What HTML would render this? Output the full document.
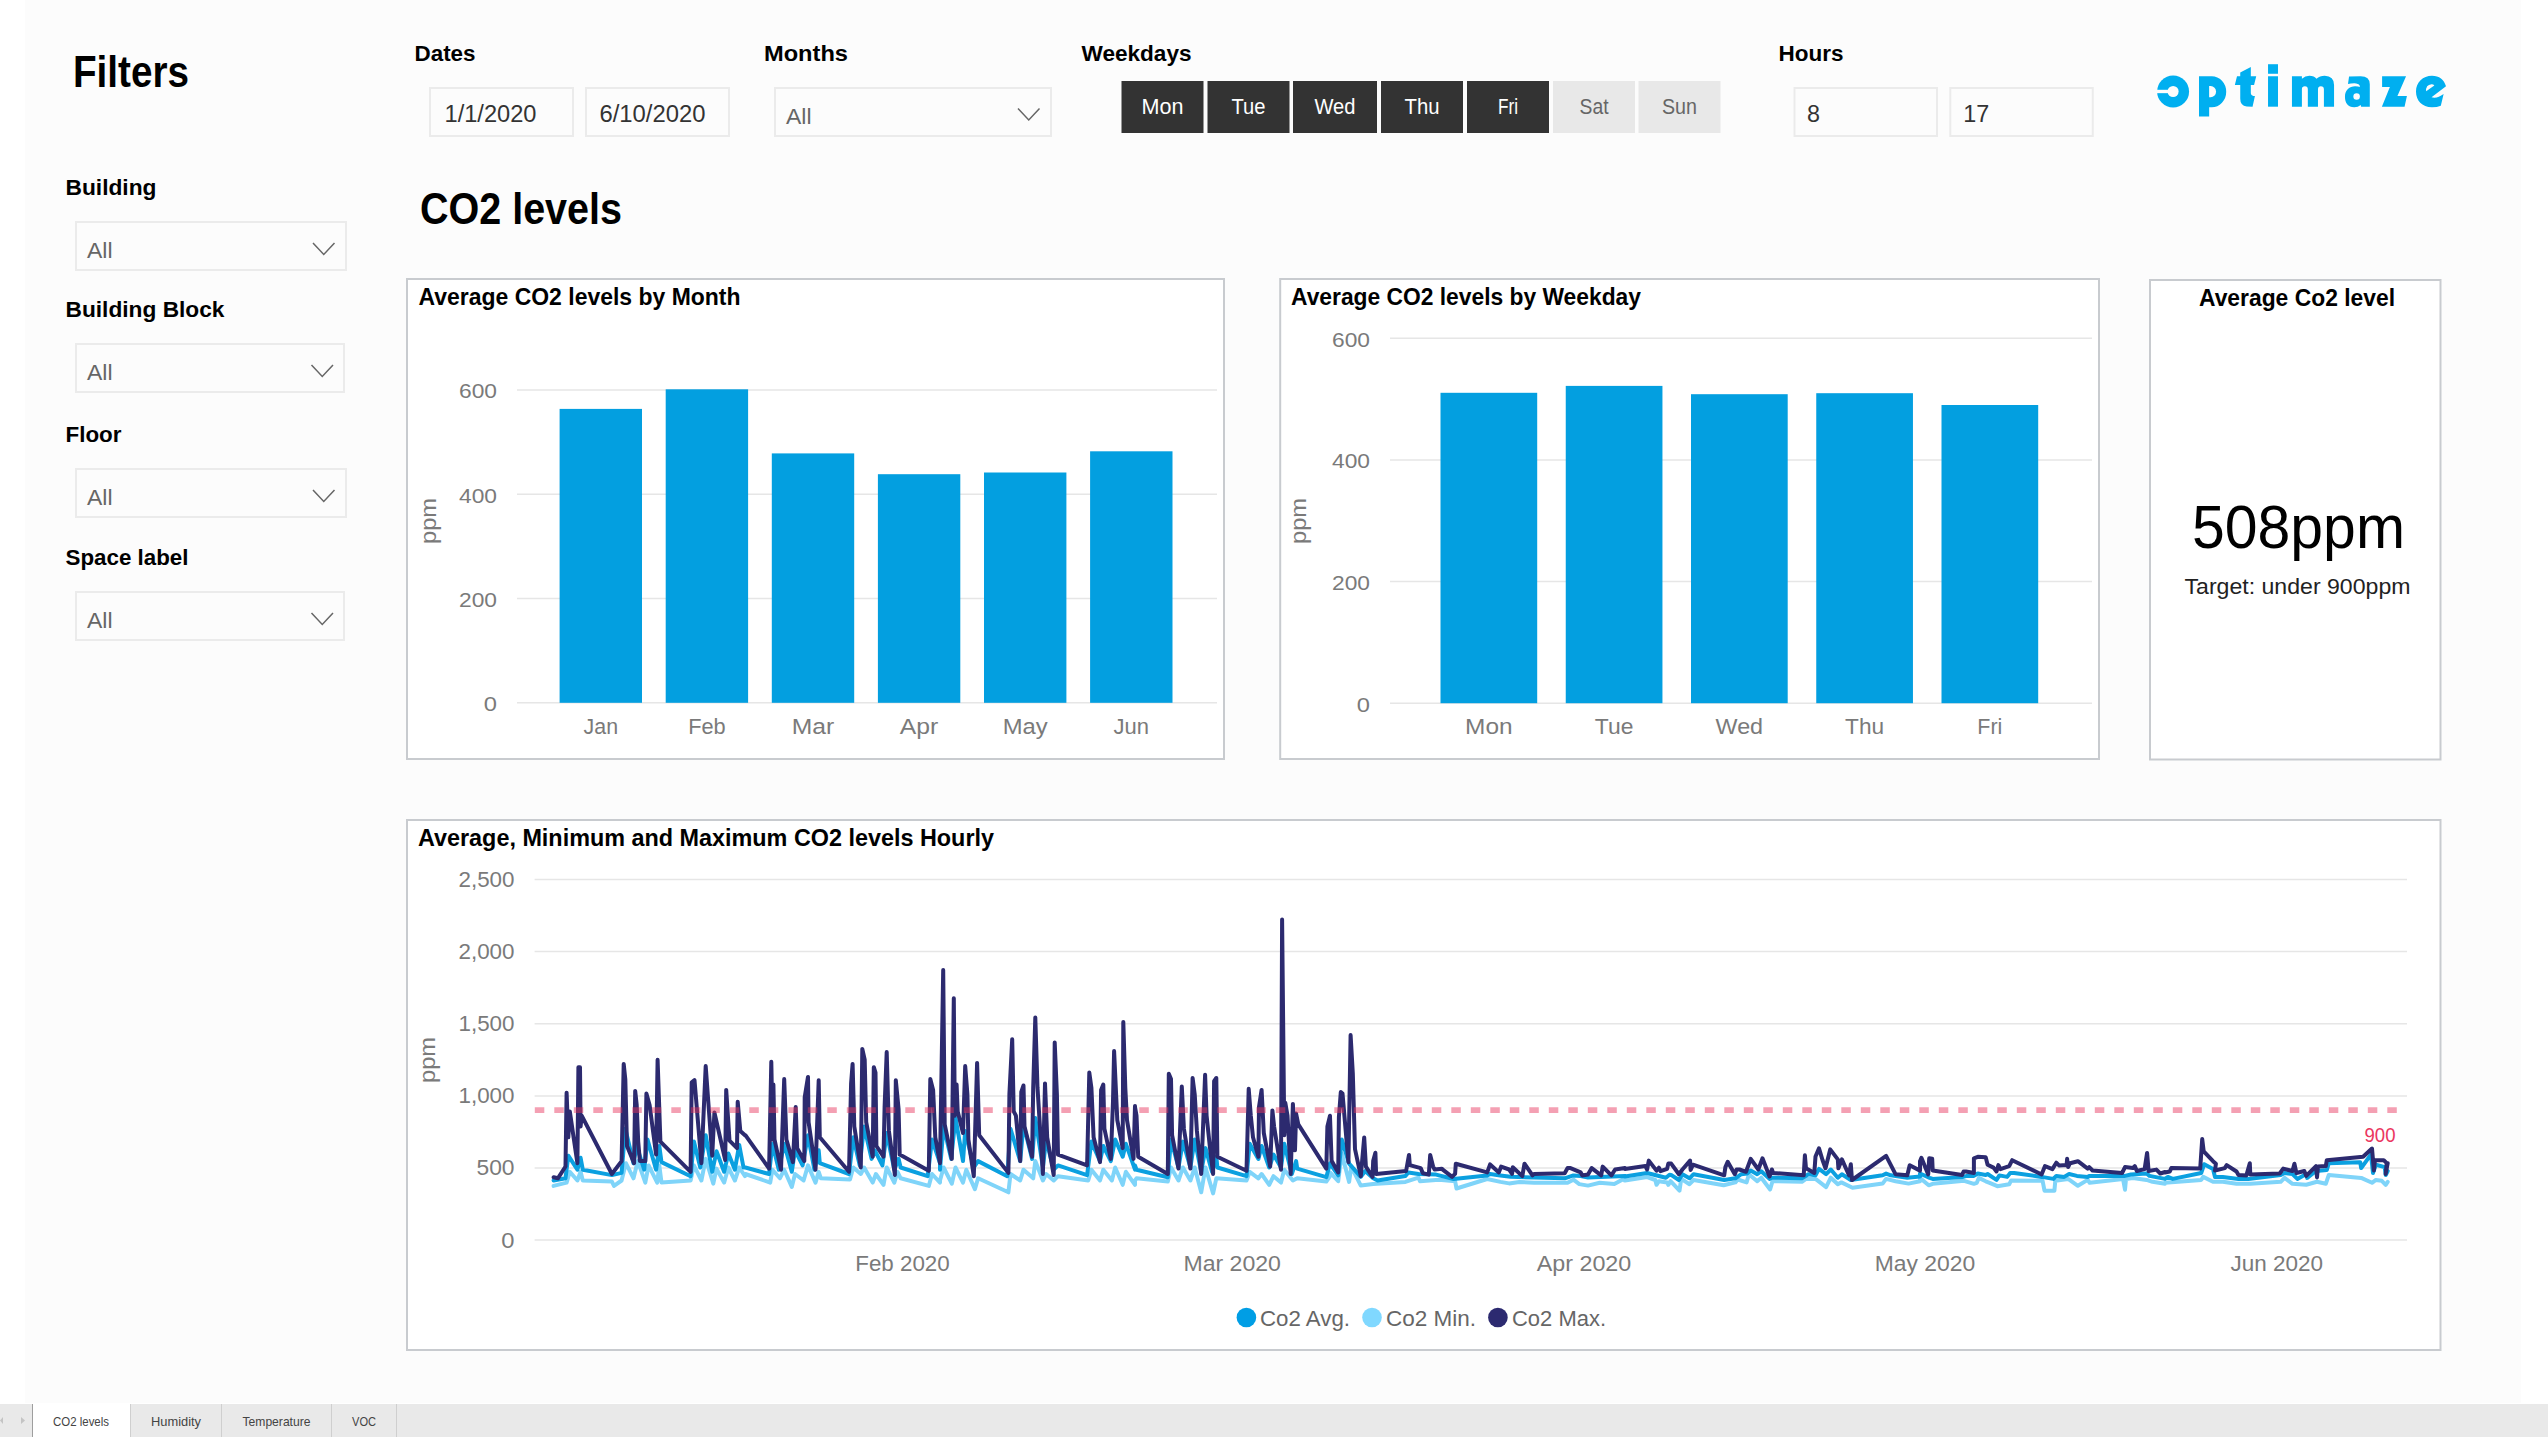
<!DOCTYPE html>
<html><head><meta charset="utf-8"><title>CO2 levels</title>
<style>
html,body{margin:0;padding:0;background:#fff;overflow:hidden;}
svg{display:block;font-family:"Liberation Sans", sans-serif;}
</style></head><body>
<svg width="2548" height="1437" viewBox="0 0 2548 1437">
<rect x="0" y="0" width="2548" height="1437" fill="#ffffff"/>
<rect x="25" y="0" width="2496" height="1403" fill="#fcfcfc"/>
<rect x="0" y="1404" width="2548" height="33" fill="#e9e9e9"/>
<rect x="33" y="1404" width="97" height="33" fill="#ffffff"/>
<line x1="32.5" y1="1404" x2="32.5" y2="1437" stroke="#9e9e9e" stroke-width="1"/>
<line x1="130.5" y1="1404" x2="130.5" y2="1437" stroke="#cfcfcf" stroke-width="1"/>
<line x1="221.5" y1="1404" x2="221.5" y2="1437" stroke="#cfcfcf" stroke-width="1"/>
<line x1="331.5" y1="1404" x2="331.5" y2="1437" stroke="#cfcfcf" stroke-width="1"/>
<line x1="396.5" y1="1404" x2="396.5" y2="1437" stroke="#cfcfcf" stroke-width="1"/>
<path d="M0 1420.5 L3 1417 L3 1424 Z" fill="#c4c4c4"/>
<path d="M21 1417 L25 1420.5 L21 1424 Z" fill="#c4c4c4"/>
<text x="53" y="1426" font-size="13.5" fill="#444" text-anchor="start" textLength="56" lengthAdjust="spacingAndGlyphs">CO2 levels</text>
<text x="151" y="1426" font-size="13.5" fill="#444" text-anchor="start" textLength="50" lengthAdjust="spacingAndGlyphs">Humidity</text>
<text x="242.5" y="1426" font-size="13.5" fill="#444" text-anchor="start" textLength="68" lengthAdjust="spacingAndGlyphs">Temperature</text>
<text x="352" y="1426" font-size="13.5" fill="#444" text-anchor="start" textLength="24" lengthAdjust="spacingAndGlyphs">VOC</text>
<text x="73" y="87" font-size="43.6" fill="#000" font-weight="bold" text-anchor="start" textLength="116" lengthAdjust="spacingAndGlyphs">Filters</text>
<text x="65.5" y="195" font-size="22" fill="#000" font-weight="bold" text-anchor="start" textLength="91" lengthAdjust="spacingAndGlyphs">Building</text>
<text x="65.5" y="317.3" font-size="22" fill="#000" font-weight="bold" text-anchor="start" textLength="159" lengthAdjust="spacingAndGlyphs">Building Block</text>
<text x="65.5" y="442.4" font-size="22" fill="#000" font-weight="bold" text-anchor="start" textLength="56" lengthAdjust="spacingAndGlyphs">Floor</text>
<text x="65.5" y="565.3" font-size="22" fill="#000" font-weight="bold" text-anchor="start" textLength="123" lengthAdjust="spacingAndGlyphs">Space label</text>
<rect x="76" y="222" width="270" height="48" fill="#fcfcfc" stroke="#ebebeb" stroke-width="2"/>
<text x="87" y="258" font-size="22" fill="#666" text-anchor="start" textLength="25.5" lengthAdjust="spacingAndGlyphs">All</text>
<path d="M313 243 L323.75 254.5 L334.5 243" fill="none" stroke="#666" stroke-width="1.5"/>
<rect x="76" y="344" width="268" height="48" fill="#fcfcfc" stroke="#ebebeb" stroke-width="2"/>
<text x="87" y="380" font-size="22" fill="#666" text-anchor="start" textLength="25.5" lengthAdjust="spacingAndGlyphs">All</text>
<path d="M311.5 365 L322.25 376.5 L333.0 365" fill="none" stroke="#666" stroke-width="1.5"/>
<rect x="76" y="469" width="270" height="48" fill="#fcfcfc" stroke="#ebebeb" stroke-width="2"/>
<text x="87" y="505" font-size="22" fill="#666" text-anchor="start" textLength="25.5" lengthAdjust="spacingAndGlyphs">All</text>
<path d="M313 490 L323.75 501.5 L334.5 490" fill="none" stroke="#666" stroke-width="1.5"/>
<rect x="76" y="592" width="268" height="48" fill="#fcfcfc" stroke="#ebebeb" stroke-width="2"/>
<text x="87" y="628" font-size="22" fill="#666" text-anchor="start" textLength="25.5" lengthAdjust="spacingAndGlyphs">All</text>
<path d="M311.5 613 L322.25 624.5 L333.0 613" fill="none" stroke="#666" stroke-width="1.5"/>
<text x="414.5" y="61" font-size="22" fill="#000" font-weight="bold" text-anchor="start" textLength="61" lengthAdjust="spacingAndGlyphs">Dates</text>
<text x="764" y="61" font-size="22" fill="#000" font-weight="bold" text-anchor="start" textLength="84" lengthAdjust="spacingAndGlyphs">Months</text>
<text x="1081.5" y="61" font-size="22" fill="#000" font-weight="bold" text-anchor="start" textLength="110" lengthAdjust="spacingAndGlyphs">Weekdays</text>
<text x="1778.5" y="61" font-size="22" fill="#000" font-weight="bold" text-anchor="start" textLength="65" lengthAdjust="spacingAndGlyphs">Hours</text>
<rect x="430" y="88" width="143" height="48" fill="#fcfcfc" stroke="#ebebeb" stroke-width="2"/>
<text x="444.5" y="122" font-size="23.5" fill="#333333" text-anchor="start" textLength="92" lengthAdjust="spacingAndGlyphs">1/1/2020</text>
<rect x="586" y="88" width="143" height="48" fill="#fcfcfc" stroke="#ebebeb" stroke-width="2"/>
<text x="599.5" y="122" font-size="23.5" fill="#333333" text-anchor="start" textLength="106" lengthAdjust="spacingAndGlyphs">6/10/2020</text>
<rect x="1794.5" y="88" width="142.5" height="48" fill="#fcfcfc" stroke="#ebebeb" stroke-width="2"/>
<text x="1807.0" y="122" font-size="23.5" fill="#333333" text-anchor="start" textLength="13" lengthAdjust="spacingAndGlyphs">8</text>
<rect x="1950.3" y="88" width="142.5" height="48" fill="#fcfcfc" stroke="#ebebeb" stroke-width="2"/>
<text x="1963.3" y="122" font-size="23.5" fill="#333333" text-anchor="start" textLength="26" lengthAdjust="spacingAndGlyphs">17</text>
<rect x="775" y="88" width="276" height="48" fill="#fcfcfc" stroke="#ebebeb" stroke-width="2"/>
<text x="786" y="124" font-size="22" fill="#666" text-anchor="start" textLength="25.5" lengthAdjust="spacingAndGlyphs">All</text>
<path d="M1018 108.5 L1028.75 120 L1039.5 108.5" fill="none" stroke="#666" stroke-width="1.5"/>
<rect x="1121.5" y="81" width="82" height="52" fill="#333333"/>
<text x="1162.5" y="114" font-size="21.8" fill="#ffffff" text-anchor="middle" textLength="42" lengthAdjust="spacingAndGlyphs">Mon</text>
<rect x="1207.5" y="81" width="82" height="52" fill="#333333"/>
<text x="1248.5" y="114" font-size="21.8" fill="#ffffff" text-anchor="middle" textLength="34" lengthAdjust="spacingAndGlyphs">Tue</text>
<rect x="1293" y="81" width="84" height="52" fill="#333333"/>
<text x="1335.0" y="114" font-size="21.8" fill="#ffffff" text-anchor="middle" textLength="41" lengthAdjust="spacingAndGlyphs">Wed</text>
<rect x="1381" y="81" width="82" height="52" fill="#333333"/>
<text x="1422.0" y="114" font-size="21.8" fill="#ffffff" text-anchor="middle" textLength="35" lengthAdjust="spacingAndGlyphs">Thu</text>
<rect x="1467" y="81" width="82" height="52" fill="#333333"/>
<text x="1508.0" y="114" font-size="21.8" fill="#ffffff" text-anchor="middle" textLength="20" lengthAdjust="spacingAndGlyphs">Fri</text>
<rect x="1553" y="81" width="82" height="52" fill="#e8e8e8"/>
<text x="1594.0" y="114" font-size="21.8" fill="#666666" text-anchor="middle" textLength="29" lengthAdjust="spacingAndGlyphs">Sat</text>
<rect x="1638.5" y="81" width="82" height="52" fill="#e8e8e8"/>
<text x="1679.5" y="114" font-size="21.8" fill="#666666" text-anchor="middle" textLength="35" lengthAdjust="spacingAndGlyphs">Sun</text>
<text x="420" y="224" font-size="43.5" fill="#000" font-weight="bold" text-anchor="start" textLength="202" lengthAdjust="spacingAndGlyphs">CO2 levels</text>
<rect x="407" y="279" width="817" height="480" fill="#ffffff" stroke="#c8cbcf" stroke-width="2"/>
<rect x="1280.2" y="279" width="818.8" height="480" fill="#ffffff" stroke="#c8cbcf" stroke-width="2"/>
<rect x="2150" y="280" width="290.5" height="479.5" fill="#ffffff" stroke="#c8cbcf" stroke-width="2"/>
<rect x="407" y="820" width="2033.5" height="530" fill="#ffffff" stroke="#c8cbcf" stroke-width="2"/>
<text x="418.5" y="304.8" font-size="23" fill="#000" font-weight="bold" text-anchor="start" textLength="322" lengthAdjust="spacingAndGlyphs">Average CO2 levels by Month</text>
<line x1="517" y1="702.8" x2="1217" y2="702.8" stroke="#e6e6e6" stroke-width="1.5"/>
<text x="497" y="711.0999999999999" font-size="21" fill="#7a7a7a" text-anchor="end" textLength="13.2" lengthAdjust="spacingAndGlyphs">0</text>
<line x1="517" y1="598.6" x2="1217" y2="598.6" stroke="#e6e6e6" stroke-width="1.5"/>
<text x="497" y="606.8666666666666" font-size="21" fill="#7a7a7a" text-anchor="end" textLength="38" lengthAdjust="spacingAndGlyphs">200</text>
<line x1="517" y1="494.3" x2="1217" y2="494.3" stroke="#e6e6e6" stroke-width="1.5"/>
<text x="497" y="502.6333333333334" font-size="21" fill="#7a7a7a" text-anchor="end" textLength="38" lengthAdjust="spacingAndGlyphs">400</text>
<line x1="517" y1="390.1" x2="1217" y2="390.1" stroke="#e6e6e6" stroke-width="1.5"/>
<text x="497" y="398.40000000000003" font-size="21" fill="#7a7a7a" text-anchor="end" textLength="38" lengthAdjust="spacingAndGlyphs">600</text>
<rect x="559.6" y="408.9" width="82.4" height="293.9" fill="#039fe0"/>
<text x="600.8000000000001" y="733.7" font-size="21.5" fill="#7a7a7a" text-anchor="middle" textLength="34.5" lengthAdjust="spacingAndGlyphs">Jan</text>
<rect x="665.7" y="389.3" width="82.4" height="313.49999999999994" fill="#039fe0"/>
<text x="706.9000000000001" y="733.7" font-size="21.5" fill="#7a7a7a" text-anchor="middle" textLength="37.5" lengthAdjust="spacingAndGlyphs">Feb</text>
<rect x="771.8" y="453.4" width="82.4" height="249.39999999999998" fill="#039fe0"/>
<text x="813.0" y="733.7" font-size="21.5" fill="#7a7a7a" text-anchor="middle" textLength="42.5" lengthAdjust="spacingAndGlyphs">Mar</text>
<rect x="877.9" y="474.2" width="82.4" height="228.59999999999997" fill="#039fe0"/>
<text x="919.1" y="733.7" font-size="21.5" fill="#7a7a7a" text-anchor="middle" textLength="38.5" lengthAdjust="spacingAndGlyphs">Apr</text>
<rect x="984.0" y="472.5" width="82.4" height="230.29999999999995" fill="#039fe0"/>
<text x="1025.2" y="733.7" font-size="21.5" fill="#7a7a7a" text-anchor="middle" textLength="45" lengthAdjust="spacingAndGlyphs">May</text>
<rect x="1090.1" y="451.3" width="82.4" height="251.49999999999994" fill="#039fe0"/>
<text x="1131.3" y="733.7" font-size="21.5" fill="#7a7a7a" text-anchor="middle" textLength="35.5" lengthAdjust="spacingAndGlyphs">Jun</text>
<text transform="translate(436,521) rotate(-90)" font-size="22" fill="#7a7a7a" text-anchor="middle" textLength="46" lengthAdjust="spacingAndGlyphs">ppm</text>
<text x="1291" y="304.8" font-size="23" fill="#000" font-weight="bold" text-anchor="start" textLength="350" lengthAdjust="spacingAndGlyphs">Average CO2 levels by Weekday</text>
<line x1="1390" y1="703.2" x2="2092" y2="703.2" stroke="#e6e6e6" stroke-width="1.5"/>
<text x="1370" y="711.5" font-size="21" fill="#7a7a7a" text-anchor="end" textLength="13.2" lengthAdjust="spacingAndGlyphs">0</text>
<line x1="1390" y1="581.5" x2="2092" y2="581.5" stroke="#e6e6e6" stroke-width="1.5"/>
<text x="1370" y="589.8333333333333" font-size="21" fill="#7a7a7a" text-anchor="end" textLength="38" lengthAdjust="spacingAndGlyphs">200</text>
<line x1="1390" y1="459.9" x2="2092" y2="459.9" stroke="#e6e6e6" stroke-width="1.5"/>
<text x="1370" y="468.1666666666667" font-size="21" fill="#7a7a7a" text-anchor="end" textLength="38" lengthAdjust="spacingAndGlyphs">400</text>
<line x1="1390" y1="338.2" x2="2092" y2="338.2" stroke="#e6e6e6" stroke-width="1.5"/>
<text x="1370" y="346.5" font-size="21" fill="#7a7a7a" text-anchor="end" textLength="38" lengthAdjust="spacingAndGlyphs">600</text>
<rect x="1440.5" y="392.8" width="96.7" height="310.40000000000003" fill="#039fe0"/>
<text x="1488.85" y="733.7" font-size="21.5" fill="#7a7a7a" text-anchor="middle" textLength="47.5" lengthAdjust="spacingAndGlyphs">Mon</text>
<rect x="1565.75" y="385.9" width="96.7" height="317.30000000000007" fill="#039fe0"/>
<text x="1614.1" y="733.7" font-size="21.5" fill="#7a7a7a" text-anchor="middle" textLength="38.5" lengthAdjust="spacingAndGlyphs">Tue</text>
<rect x="1691.0" y="394.2" width="96.7" height="309.00000000000006" fill="#039fe0"/>
<text x="1739.35" y="733.7" font-size="21.5" fill="#7a7a7a" text-anchor="middle" textLength="47.5" lengthAdjust="spacingAndGlyphs">Wed</text>
<rect x="1816.25" y="393.2" width="96.7" height="310.00000000000006" fill="#039fe0"/>
<text x="1864.6" y="733.7" font-size="21.5" fill="#7a7a7a" text-anchor="middle" textLength="39" lengthAdjust="spacingAndGlyphs">Thu</text>
<rect x="1941.5" y="405.0" width="96.7" height="298.20000000000005" fill="#039fe0"/>
<text x="1989.85" y="733.7" font-size="21.5" fill="#7a7a7a" text-anchor="middle" textLength="25" lengthAdjust="spacingAndGlyphs">Fri</text>
<text transform="translate(1306,521) rotate(-90)" font-size="22" fill="#7a7a7a" text-anchor="middle" textLength="46" lengthAdjust="spacingAndGlyphs">ppm</text>
<text x="2297" y="305.8" font-size="23.3" fill="#000" font-weight="bold" text-anchor="middle" textLength="196" lengthAdjust="spacingAndGlyphs">Average Co2 level</text>
<text x="2298.5" y="548.4" font-size="61" fill="#000" text-anchor="middle" textLength="213" lengthAdjust="spacingAndGlyphs">508ppm</text>
<text x="2297.5" y="594.3" font-size="22.8" fill="#222" text-anchor="middle" textLength="226" lengthAdjust="spacingAndGlyphs">Target: under 900ppm</text>
<text x="418" y="845.8" font-size="23" fill="#000" font-weight="bold" text-anchor="start" textLength="576" lengthAdjust="spacingAndGlyphs">Average, Minimum and Maximum CO2 levels Hourly</text>
<line x1="534.6" y1="1240.1" x2="2407" y2="1240.1" stroke="#e6e6e6" stroke-width="1.5"/>
<text x="514.5" y="1247.6" font-size="21.5" fill="#7a7a7a" text-anchor="end" textLength="13.2" lengthAdjust="spacingAndGlyphs">0</text>
<line x1="534.6" y1="1168.0" x2="2407" y2="1168.0" stroke="#e6e6e6" stroke-width="1.5"/>
<text x="514.5" y="1175.48" font-size="21.5" fill="#7a7a7a" text-anchor="end" textLength="38" lengthAdjust="spacingAndGlyphs">500</text>
<line x1="534.6" y1="1095.9" x2="2407" y2="1095.9" stroke="#e6e6e6" stroke-width="1.5"/>
<text x="514.5" y="1103.36" font-size="21.5" fill="#7a7a7a" text-anchor="end" textLength="56" lengthAdjust="spacingAndGlyphs">1,000</text>
<line x1="534.6" y1="1023.7" x2="2407" y2="1023.7" stroke="#e6e6e6" stroke-width="1.5"/>
<text x="514.5" y="1031.24" font-size="21.5" fill="#7a7a7a" text-anchor="end" textLength="56" lengthAdjust="spacingAndGlyphs">1,500</text>
<line x1="534.6" y1="951.6" x2="2407" y2="951.6" stroke="#e6e6e6" stroke-width="1.5"/>
<text x="514.5" y="959.12" font-size="21.5" fill="#7a7a7a" text-anchor="end" textLength="56" lengthAdjust="spacingAndGlyphs">2,000</text>
<line x1="534.6" y1="879.5" x2="2407" y2="879.5" stroke="#e6e6e6" stroke-width="1.5"/>
<text x="514.5" y="887.0" font-size="21.5" fill="#7a7a7a" text-anchor="end" textLength="56" lengthAdjust="spacingAndGlyphs">2,500</text>
<text transform="translate(435,1060) rotate(-90)" font-size="22" fill="#7a7a7a" text-anchor="middle" textLength="46" lengthAdjust="spacingAndGlyphs">ppm</text>
<text x="902.5" y="1271" font-size="21.5" fill="#7a7a7a" text-anchor="middle" textLength="94.5" lengthAdjust="spacingAndGlyphs">Feb 2020</text>
<text x="1232.2" y="1271" font-size="21.5" fill="#7a7a7a" text-anchor="middle" textLength="97.5" lengthAdjust="spacingAndGlyphs">Mar 2020</text>
<text x="1584" y="1271" font-size="21.5" fill="#7a7a7a" text-anchor="middle" textLength="94.5" lengthAdjust="spacingAndGlyphs">Apr 2020</text>
<text x="1925" y="1271" font-size="21.5" fill="#7a7a7a" text-anchor="middle" textLength="100.5" lengthAdjust="spacingAndGlyphs">May 2020</text>
<text x="2276.8" y="1271" font-size="21.5" fill="#7a7a7a" text-anchor="middle" textLength="92.5" lengthAdjust="spacingAndGlyphs">Jun 2020</text>
<path d="M553.6 1185.9 L566.6 1182.6 L569.8 1171.8 L577.4 1180.5 L580.6 1171.8 L582.8 1180.5 L611.9 1181.6 L614.0 1185.9 L621.6 1180.5 L625.9 1163.2 L633.5 1178.3 L637.8 1161.1 L645.3 1182.6 L648.6 1165.4 L657.2 1182.6 L659.3 1165.4 L661.5 1182.6 L690.6 1180.5 L693.9 1165.4 L701.4 1180.5 L705.7 1158.9 L713.3 1183.7 L716.5 1168.6 L724.1 1182.6 L728.4 1167.5 L734.9 1180.5 L739.2 1167.5 L745.0 1176.2 L745.4 1174.0 L770.2 1182.6 L772.4 1169.7 L779.9 1178.3 L784.2 1169.7 L791.8 1186.9 L795.0 1174.0 L803.6 1180.5 L808.0 1165.4 L815.5 1182.6 L818.7 1171.8 L820.9 1178.3 L850.0 1179.4 L853.3 1167.5 L860.8 1174.0 L864.1 1167.5 L872.7 1182.6 L875.9 1174.0 L883.5 1184.8 L886.7 1167.5 L894.3 1182.6 L897.5 1171.8 L900.7 1178.3 L928.8 1185.9 L932.0 1174.0 L940.0 1182.6 L940.0 1180.5 L943.6 1167.5 L951.8 1183.7 L955.5 1167.5 L963.0 1182.6 L966.3 1169.7 L974.9 1189.1 L978.1 1178.3 L1008.4 1192.3 L1010.5 1174.0 L1020.2 1180.5 L1023.5 1169.7 L1033.2 1178.3 L1035.3 1161.1 L1042.9 1180.5 L1046.1 1174.0 L1053.7 1180.5 L1058.0 1176.2 L1088.2 1180.5 L1091.4 1169.7 L1100.0 1180.5 L1103.3 1169.7 L1111.9 1180.5 L1115.2 1167.5 L1122.7 1184.8 L1125.9 1171.8 L1135.0 1184.8 L1135.0 1180.5 L1136.5 1178.3 L1167.8 1181.6 L1171.0 1167.5 L1178.5 1180.5 L1182.9 1167.5 L1190.4 1180.5 L1194.7 1167.5 L1201.2 1192.3 L1205.5 1167.5 L1213.1 1193.4 L1216.3 1178.3 L1246.5 1180.5 L1249.7 1171.8 L1258.4 1178.3 L1261.6 1174.0 L1269.2 1184.8 L1273.5 1176.2 L1281.0 1182.6 L1284.3 1169.7 L1292.9 1180.5 L1297.2 1178.3 L1326.3 1181.6 L1330.0 1176.2 L1330.0 1172.4 L1338.2 1181.2 L1341.8 1153.4 L1349.1 1181.9 L1351.3 1166.6 L1360.8 1185.6 L1373.2 1184.1 L1405.4 1181.9 L1418.5 1177.6 L1420.0 1181.2 L1439.0 1179.7 L1455.1 1181.2 L1456.5 1188.5 L1487.2 1179.0 L1500.4 1181.9 L1509.1 1183.4 L1519.4 1181.9 L1534.0 1182.7 L1567.6 1182.7 L1573.4 1179.7 L1579.3 1184.1 L1588.0 1185.6 L1599.7 1182.7 L1614.3 1184.1 L1625.0 1178.3 L1624.9 1180.6 L1647.1 1177.1 L1655.3 1180.0 L1656.5 1184.8 L1658.9 1181.2 L1667.1 1182.4 L1668.3 1184.8 L1670.6 1181.2 L1679.5 1190.6 L1681.2 1178.9 L1689.5 1184.2 L1693.6 1180.0 L1723.6 1185.3 L1735.4 1182.4 L1737.7 1179.5 L1746.6 1182.4 L1748.9 1174.2 L1757.2 1181.2 L1761.3 1177.7 L1770.1 1189.5 L1772.5 1181.2 L1801.9 1181.8 L1806.0 1178.9 L1815.5 1178.9 L1826.1 1187.1 L1830.8 1177.7 L1837.8 1184.2 L1841.4 1182.4 L1852.5 1187.7 L1882.6 1183.6 L1886.1 1178.9 L1895.5 1181.2 L1908.5 1183.6 L1920.0 1181.2 L1920.0 1177.9 L1928.7 1185.3 L1932.7 1183.8 L1964.1 1180.8 L1973.9 1183.8 L1976.8 1182.8 L1978.8 1177.9 L1985.7 1181.3 L1989.6 1182.8 L1997.4 1186.2 L2009.2 1184.3 L2011.2 1180.4 L2042.6 1180.8 L2044.5 1190.7 L2054.4 1190.7 L2055.3 1180.8 L2068.1 1178.9 L2077.9 1185.8 L2087.7 1179.9 L2089.7 1182.8 L2123.0 1178.9 L2125.0 1189.7 L2126.0 1178.9 L2132.9 1177.9 L2146.6 1179.9 L2152.5 1181.8 L2165.0 1183.8 L2165.0 1182.8 L2201.2 1179.9 L2203.2 1176.9 L2213.0 1181.8 L2222.8 1181.8 L2236.5 1183.8 L2250.3 1183.8 L2280.7 1181.8 L2284.6 1177.9 L2292.5 1183.8 L2306.2 1184.8 L2317.0 1181.8 L2325.8 1183.8 L2328.8 1175.0 L2361.2 1177.9 L2372.0 1182.8 L2375.9 1179.9 L2381.8 1180.8 L2385.7 1184.8 L2387.7 1181.8" fill="none" stroke="#7fd4f9" stroke-width="4" stroke-linejoin="round" stroke-linecap="round"/>
<path d="M553.6 1180.5 L565.5 1178.3 L568.3 1155.7 L577.4 1169.7 L580.6 1157.8 L582.8 1169.7 L611.9 1175.1 L621.6 1172.9 L625.3 1128.7 L633.5 1163.2 L636.7 1146.0 L644.2 1169.7 L647.5 1139.5 L656.1 1169.7 L659.3 1146.0 L661.5 1162.1 L690.6 1176.2 L693.9 1141.6 L700.3 1167.5 L705.7 1135.2 L712.2 1171.8 L716.5 1151.3 L724.1 1171.8 L728.4 1153.5 L734.9 1169.7 L739.2 1144.9 L743.5 1167.5 L745.4 1167.5 L769.1 1174.0 L772.4 1143.8 L778.8 1169.7 L784.2 1143.8 L791.8 1171.8 L795.0 1150.3 L802.6 1165.4 L808.0 1135.2 L814.4 1169.7 L818.7 1150.3 L819.8 1163.2 L849.0 1174.0 L853.3 1137.3 L859.7 1165.4 L864.1 1126.5 L871.6 1158.9 L874.8 1150.3 L882.4 1165.4 L886.7 1133.0 L894.3 1169.7 L898.6 1158.9 L900.7 1167.5 L927.7 1176.2 L932.0 1139.5 L940.0 1163.2 L940.0 1169.7 L943.6 1126.5 L951.2 1158.9 L955.5 1117.9 L963.0 1161.1 L965.2 1130.9 L973.8 1167.5 L978.1 1161.1 L1007.3 1176.2 L1010.5 1128.7 L1020.2 1161.1 L1023.5 1124.4 L1032.1 1158.9 L1035.3 1117.9 L1042.9 1167.5 L1046.1 1139.5 L1053.7 1169.7 L1058.0 1165.4 L1087.1 1175.1 L1091.4 1141.6 L1100.0 1161.1 L1103.3 1146.0 L1110.8 1161.1 L1115.2 1139.5 L1122.7 1156.7 L1125.9 1143.8 L1135.0 1169.7 L1135.0 1165.4 L1136.5 1169.7 L1167.8 1177.2 L1171.0 1139.5 L1178.5 1167.5 L1182.9 1141.6 L1190.4 1167.5 L1194.7 1139.5 L1201.2 1171.8 L1205.5 1148.1 L1212.0 1171.8 L1216.3 1156.7 L1217.4 1167.5 L1246.5 1176.2 L1249.7 1143.8 L1258.4 1158.9 L1261.6 1146.0 L1269.2 1167.5 L1273.5 1154.6 L1281.0 1167.5 L1284.3 1143.8 L1291.8 1174.0 L1296.1 1161.1 L1297.2 1168.6 L1326.3 1177.2 L1330.0 1163.2 L1330.0 1163.7 L1338.2 1175.4 L1341.8 1139.6 L1349.1 1163.7 L1360.8 1176.8 L1365.2 1171.0 L1373.2 1178.3 L1377.6 1180.5 L1405.4 1176.1 L1408.3 1172.4 L1418.5 1173.9 L1436.1 1174.6 L1453.6 1179.0 L1487.2 1175.4 L1490.1 1173.9 L1500.4 1175.4 L1510.6 1176.8 L1564.7 1178.3 L1573.4 1175.4 L1580.7 1176.1 L1588.0 1177.6 L1625.0 1176.1 L1624.9 1176.5 L1647.1 1173.0 L1665.9 1177.7 L1669.5 1174.8 L1671.8 1175.3 L1678.9 1180.0 L1682.4 1174.2 L1689.5 1178.3 L1693.6 1174.2 L1724.2 1180.0 L1735.4 1178.3 L1741.3 1174.2 L1747.2 1173.6 L1750.7 1170.6 L1757.2 1174.2 L1761.3 1171.2 L1769.5 1178.9 L1771.9 1177.7 L1801.9 1178.3 L1808.4 1174.2 L1815.5 1175.3 L1819.0 1168.9 L1826.1 1174.2 L1830.8 1169.5 L1837.8 1177.7 L1841.9 1174.2 L1850.8 1180.0 L1882.6 1175.3 L1886.1 1173.6 L1890.8 1175.3 L1907.3 1177.7 L1920.0 1176.5 L1920.0 1173.5 L1929.7 1177.9 L1932.7 1178.9 L1963.1 1176.9 L1967.0 1175.9 L1973.9 1175.9 L1977.8 1173.5 L1985.7 1175.0 L1987.6 1174.0 L1996.5 1179.9 L1999.4 1175.4 L2007.2 1176.9 L2010.2 1173.0 L2014.1 1173.0 L2041.6 1176.9 L2053.4 1178.9 L2056.3 1175.9 L2064.2 1176.9 L2069.1 1174.0 L2076.9 1175.9 L2087.7 1176.9 L2089.7 1175.9 L2125.0 1175.9 L2130.9 1174.5 L2146.6 1173.5 L2149.5 1175.9 L2165.0 1178.9 L2165.0 1178.9 L2167.9 1176.9 L2172.8 1178.9 L2201.2 1173.0 L2204.2 1164.2 L2213.0 1169.1 L2215.0 1176.9 L2222.8 1176.9 L2238.5 1178.9 L2248.3 1178.9 L2280.7 1175.0 L2284.6 1173.0 L2292.5 1174.0 L2297.4 1178.9 L2306.2 1174.0 L2307.2 1177.9 L2316.0 1171.0 L2326.8 1170.0 L2328.8 1163.2 L2360.2 1162.2 L2361.2 1168.1 L2371.0 1154.3 L2373.0 1173.0 L2375.9 1164.7 L2384.7 1167.1 L2385.7 1175.0 L2387.7 1171.0" fill="none" stroke="#0ba0e0" stroke-width="4" stroke-linejoin="round" stroke-linecap="round"/>
<path d="M553.6 1177.2 L557.9 1178.3 L565.5 1166.5 L566.6 1092.7 L568.3 1137.3 L569.8 1111.4 L577.4 1163.2 L578.4 1067.2 L580.0 1067.2 L580.6 1126.5 L581.7 1115.7 L611.9 1174.0 L621.6 1161.1 L623.7 1064.0 L625.3 1079.1 L627.0 1146.0 L634.1 1163.2 L635.2 1090.9 L636.7 1105.0 L638.2 1141.6 L639.9 1161.1 L645.3 1161.1 L646.4 1093.5 L649.6 1105.0 L656.1 1154.6 L657.6 1059.7 L660.4 1141.6 L690.6 1171.8 L691.7 1082.3 L694.5 1080.2 L701.4 1163.2 L705.7 1066.1 L712.2 1155.7 L714.4 1112.5 L717.6 1126.5 L725.2 1160.0 L726.2 1089.9 L729.5 1140.6 L737.0 1148.1 L737.7 1101.7 L740.3 1130.9 L745.0 1135.2 L745.4 1135.2 L769.1 1168.6 L771.3 1061.8 L772.8 1139.5 L773.4 1084.5 L774.5 1139.5 L781.0 1169.7 L784.2 1079.1 L786.4 1139.5 L792.9 1162.1 L795.7 1107.1 L797.2 1148.1 L804.3 1161.1 L804.7 1097.4 L808.0 1076.9 L808.6 1122.2 L815.5 1169.7 L818.7 1080.2 L819.8 1137.3 L849.0 1171.8 L851.1 1083.4 L852.6 1064.0 L854.3 1126.5 L860.8 1167.5 L862.3 1048.9 L864.7 1059.7 L866.2 1122.2 L872.7 1156.7 L873.8 1067.2 L875.5 1072.6 L876.4 1146.0 L883.5 1156.7 L884.6 1107.1 L886.7 1052.1 L888.9 1130.9 L894.9 1175.1 L895.8 1080.2 L898.6 1109.3 L899.7 1154.6 L928.8 1170.8 L930.3 1079.1 L933.1 1089.9 L935.3 1137.3 L940.0 1163.2 L940.0 1163.2 L943.2 970.1 L944.7 1124.4 L951.8 1158.9 L953.8 998.2 L954.8 1115.7 L956.6 1084.5 L957.7 1111.4 L963.0 1133.0 L965.2 1066.1 L967.4 1094.2 L968.4 1139.5 L973.8 1176.2 L977.1 1062.9 L979.2 1135.2 L1008.4 1172.9 L1009.4 1094.2 L1012.2 1039.2 L1013.7 1111.4 L1015.9 1115.7 L1020.2 1161.1 L1021.3 1092.0 L1023.5 1085.5 L1024.5 1126.5 L1032.1 1156.7 L1033.2 1087.7 L1035.3 1017.6 L1037.5 1087.7 L1042.9 1174.0 L1045.0 1083.4 L1047.2 1137.3 L1053.7 1175.1 L1054.7 1042.4 L1056.9 1094.2 L1058.0 1154.6 L1087.1 1165.4 L1089.3 1072.6 L1091.4 1087.7 L1093.6 1137.3 L1100.0 1162.1 L1101.1 1089.9 L1103.3 1084.5 L1104.4 1128.7 L1110.8 1158.9 L1113.0 1101.7 L1114.1 1051.0 L1117.3 1120.1 L1122.7 1148.1 L1123.3 1021.9 L1125.3 1087.7 L1127.0 1120.1 L1133.5 1158.9 L1135.0 1106.0 L1135.0 1107.1 L1136.5 1115.7 L1138.2 1156.7 L1167.8 1174.0 L1168.8 1073.7 L1171.0 1079.1 L1172.1 1135.2 L1178.5 1168.6 L1181.8 1086.6 L1183.9 1128.7 L1190.4 1168.6 L1192.6 1078.0 L1194.7 1094.2 L1196.9 1130.9 L1201.2 1174.0 L1205.1 1074.8 L1206.6 1115.7 L1209.8 1146.0 L1213.1 1174.0 L1214.1 1081.2 L1216.3 1078.0 L1217.4 1156.7 L1246.5 1170.8 L1248.7 1088.8 L1250.8 1115.7 L1253.0 1137.3 L1258.4 1156.7 L1259.0 1107.1 L1261.6 1089.9 L1263.8 1133.0 L1270.2 1166.5 L1272.4 1110.4 L1274.1 1126.5 L1281.0 1169.7 L1282.1 919.4 L1284.3 1135.2 L1285.3 1102.8 L1287.5 1115.7 L1290.7 1174.0 L1292.9 1103.9 L1295.0 1150.3 L1296.1 1113.6 L1298.3 1124.4 L1326.3 1168.6 L1327.4 1126.5 L1330.0 1115.7 L1330.0 1116.9 L1331.6 1160.7 L1338.2 1172.4 L1338.9 1116.9 L1340.8 1092.1 L1342.5 1093.5 L1348.4 1162.2 L1350.6 1035.1 L1352.8 1073.1 L1355.0 1149.1 L1360.8 1176.1 L1364.2 1137.4 L1365.9 1166.6 L1372.5 1176.8 L1373.2 1160.7 L1375.4 1152.7 L1376.1 1173.9 L1406.1 1171.0 L1409.0 1154.9 L1409.8 1165.1 L1420.7 1168.1 L1422.9 1173.2 L1428.8 1174.6 L1430.2 1154.9 L1433.1 1166.6 L1434.6 1169.5 L1441.9 1168.8 L1443.4 1170.2 L1452.1 1176.8 L1455.1 1173.9 L1455.8 1163.7 L1487.2 1172.4 L1490.1 1164.4 L1498.9 1172.4 L1501.1 1166.6 L1509.1 1169.5 L1512.1 1173.9 L1512.8 1167.3 L1522.3 1176.1 L1524.5 1163.7 L1532.5 1175.4 L1534.0 1173.9 L1564.7 1173.2 L1567.6 1168.1 L1570.5 1168.1 L1580.7 1172.4 L1582.2 1175.4 L1588.0 1174.6 L1591.7 1168.1 L1601.2 1175.4 L1602.7 1166.6 L1611.4 1175.4 L1615.1 1169.5 L1625.0 1168.1 L1624.9 1168.9 L1645.3 1165.9 L1647.1 1169.5 L1648.8 1160.6 L1656.5 1170.6 L1658.9 1167.7 L1660.6 1171.2 L1667.1 1168.9 L1668.3 1163.6 L1671.2 1163.6 L1678.9 1174.2 L1682.4 1169.5 L1690.1 1160.6 L1690.6 1170.0 L1693.0 1164.7 L1724.2 1175.3 L1725.4 1167.1 L1727.7 1161.8 L1734.8 1174.2 L1736.6 1169.5 L1739.5 1169.5 L1746.0 1171.8 L1750.7 1158.9 L1758.3 1169.5 L1762.5 1158.3 L1769.5 1176.5 L1771.9 1169.5 L1773.1 1173.0 L1803.7 1175.3 L1804.9 1155.3 L1806.0 1168.3 L1814.3 1173.0 L1815.5 1156.5 L1819.0 1148.3 L1822.5 1160.0 L1825.5 1168.3 L1830.2 1149.4 L1837.8 1159.4 L1838.4 1168.3 L1841.9 1159.4 L1849.0 1175.3 L1850.8 1164.2 L1852.0 1180.0 L1886.1 1155.9 L1895.5 1174.2 L1907.3 1175.3 L1909.7 1165.3 L1920.0 1170.6 L1920.0 1161.2 L1921.4 1157.8 L1928.2 1174.5 L1929.2 1158.3 L1932.2 1158.8 L1932.7 1170.5 L1962.1 1175.0 L1963.6 1171.5 L1966.0 1171.5 L1973.9 1173.0 L1973.9 1158.3 L1977.8 1156.8 L1985.7 1157.3 L1987.6 1164.7 L1993.5 1167.6 L1996.5 1171.5 L1998.4 1165.1 L2000.4 1169.1 L2009.2 1166.1 L2012.2 1160.2 L2041.6 1174.5 L2045.0 1166.1 L2052.4 1169.1 L2056.3 1162.7 L2059.3 1165.6 L2066.6 1165.1 L2067.1 1158.8 L2068.1 1167.1 L2070.1 1163.2 L2077.9 1161.2 L2081.8 1164.2 L2087.7 1168.6 L2089.2 1167.1 L2092.6 1170.5 L2122.1 1173.0 L2125.0 1167.1 L2132.9 1168.1 L2134.8 1166.1 L2136.8 1171.0 L2144.6 1169.1 L2147.1 1152.9 L2148.6 1171.0 L2156.4 1169.6 L2160.3 1173.5 L2165.0 1172.0 L2165.0 1172.5 L2169.8 1171.5 L2171.3 1168.1 L2200.2 1168.6 L2202.2 1139.1 L2203.7 1151.4 L2213.0 1161.2 L2215.9 1163.7 L2215.0 1170.5 L2224.8 1168.1 L2226.7 1165.1 L2236.5 1171.5 L2238.5 1175.0 L2246.4 1175.4 L2249.8 1163.2 L2250.3 1174.5 L2279.7 1173.5 L2283.2 1168.6 L2292.5 1171.0 L2294.4 1163.7 L2296.4 1173.0 L2304.3 1171.0 L2306.2 1175.9 L2316.0 1166.1 L2317.0 1177.4 L2318.0 1166.6 L2325.8 1166.1 L2326.8 1160.2 L2363.1 1156.8 L2372.0 1148.5 L2373.9 1170.5 L2374.9 1160.2 L2383.7 1160.2 L2386.7 1163.2 L2385.7 1174.0 L2387.7 1163.2" fill="none" stroke="#2c2a6f" stroke-width="4" stroke-linejoin="round" stroke-linecap="round"/>
<line x1="534.8" y1="1110.15" x2="2396.8" y2="1110.15" stroke="#e8365e" stroke-opacity="0.47" stroke-width="5.6" stroke-dasharray="9.5 10"/>
<text x="2395.5" y="1142" font-size="20.5" fill="#eb375f" text-anchor="end" textLength="31" lengthAdjust="spacingAndGlyphs">900</text>
<circle cx="1246.4" cy="1317.5" r="9.8" fill="#009ee5"/>
<text x="1260" y="1326" font-size="22" fill="#666" text-anchor="start" textLength="90" lengthAdjust="spacingAndGlyphs">Co2 Avg.</text>
<circle cx="1372" cy="1317.5" r="9.8" fill="#80d8ff"/>
<text x="1386" y="1326" font-size="22" fill="#666" text-anchor="start" textLength="90" lengthAdjust="spacingAndGlyphs">Co2 Min.</text>
<circle cx="1497.9" cy="1317.5" r="9.8" fill="#2c2a70"/>
<text x="1512" y="1326" font-size="22" fill="#666" text-anchor="start" textLength="94" lengthAdjust="spacingAndGlyphs">Co2 Max.</text>
<g fill="#00aff0">
<g transform="translate(2150,60) scale(0.043178)">
<circle cx="535" cy="730" r="370"/>
<path d="M1135 375 L1430 375 A335 360 0 0 1 1430 1095 L1370 1095 L1370 1310 L1135 1310 Z"/>
<path d="M2090 290 L2335 160 L2335 375 L2460 375 L2410 580 L2335 580 L2335 770 Q2340 835 2430 835 L2375 1080 L2240 1075 Q2090 1065 2090 900 L2090 580 L1965 580 L2015 375 L2090 375 Z"/>
</g>
<g transform="translate(2260,60) scale(0.038270)">
<rect x="210" y="110" width="260" height="250"/>
<rect x="210" y="425" width="260" height="795"/>
<path d="M835 425 L1095 425 L1095 490 Q1180 410 1290 410 Q1420 410 1475 490 Q1560 410 1690 410 Q1935 420 1935 650 L1935 1220 L1670 1220 L1670 770 Q1670 685 1590 685 Q1515 685 1515 770 L1515 1220 L1250 1220 L1250 770 Q1250 685 1175 685 Q1095 685 1095 760 L1095 1220 L835 1220 Z"/>
</g>
<g transform="translate(2340,60) scale(0.043178)">
<path d="M210 380 L480 375 Q690 380 690 560 L690 1080 L490 1080 L480 1040 Q420 1095 330 1095 C180 1095 115 990 115 850 C115 700 220 610 350 610 Q430 610 460 625 L455 590 Q430 545 330 540 Q250 540 185 555 Z"/>
<path d="M975 375 L1530 375 L1330 835 L1550 835 L1495 1080 L970 1080 L1155 625 L975 625 Z"/>
<path d="M2455 610 L2120 865 Q2250 900 2400 790 L2335 1060 Q2250 1095 2130 1095 C1900 1090 1760 940 1760 730 C1760 520 1920 365 2130 365 C2300 368 2410 450 2455 610 Z"/>
</g>
</g>
<g fill="#fcfcfc">
<g transform="translate(2150,60) scale(0.043178)">
<circle cx="535" cy="730" r="128"/>
<rect x="150" y="690" width="300" height="78"/>
<path d="M1370 605 L1405 605 A125 127 0 0 1 1405 860 L1370 860 Z"/>
</g>
<g transform="translate(2340,60) scale(0.043178)">
<circle cx="385" cy="845" r="75"/>
<path d="M1995 725 Q1980 575 2120 560 Q2165 560 2185 590 Z"/>
</g>
</g>

</svg>
</body></html>
